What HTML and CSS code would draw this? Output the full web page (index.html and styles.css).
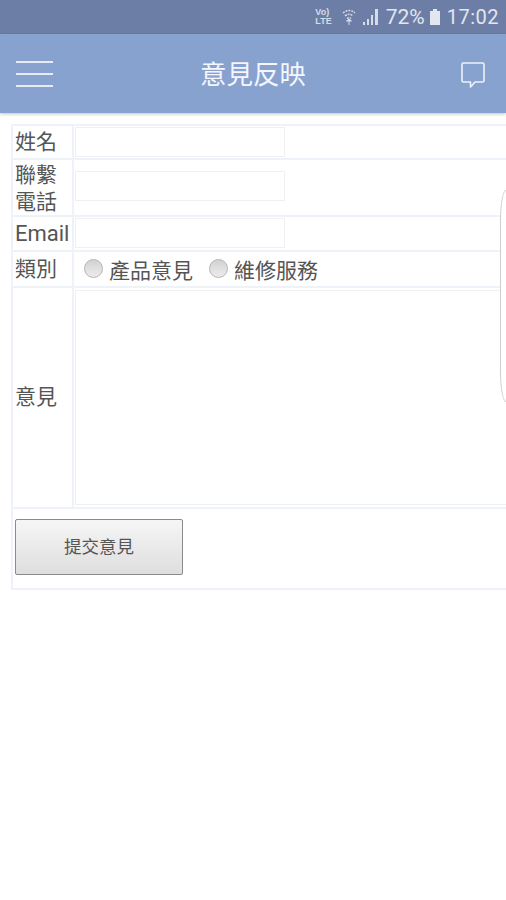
FILE: index.html
```html
<!doctype html>
<html lang="zh-Hant">
  <head>
    <meta charset="UTF-8" />
    <meta name="viewport" content="width=device-width, initial-scale=1.0" />
    <title>意見反映</title>
    <link rel="stylesheet" href="styles.css">
  </head>
  <body>
    <div class="statusbar">
      <span class="volte">Vo)<br>LTE</span>
      <svg class="wifi" width="16" height="18" viewBox="0 0 16 18">
        <path d="M2 5 Q8 0 14 5 M4 8 Q8 4.500 12 8 M6 10.500 Q8 9 10 10.500" fill="none" stroke="#d5dbe8" stroke-width="1.500" stroke-dasharray="2 1" />
        <path d="M5.500 13 L8 11 L10.500 13 Z M8 13 V17" fill="#d5dbe8" stroke="#d5dbe8" />
      </svg>
      <svg class="signal" width="18" height="18" viewBox="0 0 18 18">
        <path d="M1 14h2v3H1z M5 11h2v6H5z M9 7h2v10H9z" fill="#d5dbe8" />
        <path d="M13 1h3v16h-3z" fill="#d5dbe8" />
      </svg>
      <span class="battery-pct">72%</span>
      <svg class="battery" width="12" height="16" viewBox="0 0 12 16">
        <path d="M4 0h4v2h3v14H1V2h3z" fill="#e2e6ef" />
      </svg>
      <span class="clock">17:02</span>
    </div>

    <header class="topbar">
      <div class="menu-icon"><span></span><span></span><span></span></div>
      <h1>意見反映</h1>
      <svg class="chat-icon" width="26" height="28" viewBox="0 0 26 28">
        <path d="M3.500 2h19a1.500 1.500 0 0 1 1.500 1.500v16a1.500 1.500 0 0 1-1.500 1.500H15l-4.500 5v-5H3.500A1.500 1.500 0 0 1 2 19.500v-16A1.500 1.500 0 0 1 3.500 2z" fill="none" stroke="#eef2f9" stroke-width="1.600" stroke-linejoin="round" />
      </svg>
    </header>

    <main class="content">
      <table class="form-table">
        <tr class="row-name">
          <th>姓名</th>
          <td><input class="field" type="text"></td>
        </tr>
        <tr class="row-phone">
          <th>聯繫<br>電話</th>
          <td><input class="field" type="text"></td>
        </tr>
        <tr class="row-email">
          <th>Email</th>
          <td><input class="field" type="text"></td>
        </tr>
        <tr class="row-type">
          <th>類別</th>
          <td>
            <div class="radio-group">
              <span class="radio"></span><span class="radio-label">產品意見</span>
              <span class="radio radio-second"></span><span class="radio-label">維修服務</span>
            </div>
          </td>
        </tr>
        <tr class="row-opinion">
          <th>意見</th>
          <td><div class="opinion-box"></div></td>
        </tr>
        <tr class="row-submit">
          <td colspan="2"><button class="submit">提交意見</button></td>
        </tr>
      </table>
    </main>

    <div class="side-handle"></div>
  </body>
</html>
```

FILE: styles.css
```css
html,
body {
  margin: 0;
  padding: 0;
  height: 900px;
  overflow: hidden;
  background-color: #ffffff;
}
body {
  position: relative;
  font-family: "Noto Sans CJK TC", "Liberation Sans", sans-serif;
  color: #555;
}
.statusbar {
  height: 34px;
  background-color: #6c7ea6;
  display: flex;
  align-items: center;
  justify-content: flex-end;
  padding-right: 7px;
  color: #e2e6ef;
  box-sizing: border-box;
}
.volte {
  font-family: "Liberation Sans", sans-serif;
  font-size: 9px;
  line-height: 9px;
  font-weight: bold;
  margin-right: 9px;
  color: #d5dbe8;
}
.wifi {
  margin-right: 5px;
}
.signal {
  margin-right: 6px;
}
.battery-pct,
.clock {
  font-family: "Roboto", sans-serif;
  font-size: 20px;
}
.battery-pct {
  font-size: 21px;
}
.battery {
  margin: 0 6px 0 4px;
}
.clock {
  letter-spacing: 0.5px;
}
.topbar {
  height: 79px;
  background-color: #88a2d0;
  box-shadow: 0 1px 3px rgba(0, 0, 0, 0.25);
  display: flex;
  align-items: center;
  justify-content: space-between;
  padding: 0 20px 0 16px;
  position: relative;
}
.topbar h1 {
  position: absolute;
  left: 0;
  right: 0;
  top: 20px;
  margin: 0;
  text-align: center;
  font-size: 26.500px;
  line-height: 38px;
  font-weight: 400;
  color: #f4f6fb;
}
.menu-icon {
  display: flex;
  flex-direction: column;
  gap: 10px;
  width: 37px;
}
.menu-icon span {
  display: block;
  height: 2px;
  background-color: #e6ebf5;
}
.chat-icon {
  margin-top: 2px;
}
.content {
  padding: 11px 0 0 11px;
  overflow: hidden;
}
.form-table {
  width: 520px;
  table-layout: fixed;
  border-collapse: collapse;
}
.form-table th,
.form-table td {
  border: 2px solid #eef2f9;
  padding: 0;
  font-weight: 400;
  font-size: 21px;
  color: #555;
}
.form-table th {
  width: 61px;
  text-align: left;
  padding: 0 0 4px 2px;
  box-sizing: border-box;
  line-height: 27px;
}
.form-table td {
  padding-left: 1px;
}
.row-name {
  height: 34px;
}
.row-phone {
  height: 57px;
}
.form-table .row-phone th {
  padding-bottom: 0;
  vertical-align: top;
}
.row-phone .field {
  margin-bottom: 4px;
}
.row-email {
  height: 35px;
}
.form-table .row-email th {
  font-family: "Roboto", sans-serif;
  font-size: 22px;
  padding-bottom: 0;
}
.row-email .field {
  margin-bottom: 2px;
}
.row-type {
  height: 36px;
}
.row-opinion {
  height: 221px;
}
.row-submit {
  height: 81px;
}
.form-table .row-submit td {
  padding: 0 0 3px 2px;
}
.field {
  display: block;
  width: 210px;
  height: 30px;
  box-sizing: border-box;
  border: 1px solid #f0f0f2;
  background-color: #ffffff;
  padding: 0;
  margin: 0;
}
.radio-group {
  display: flex;
  align-items: center;
}
.radio {
  width: 19px;
  height: 19px;
  box-sizing: border-box;
  border-radius: 50%;
  border: 1px solid #b5b5b5;
  background: linear-gradient(#d2d2d2, #ececec);
  margin: 0 0 1px 9px;
}
.radio-second {
  margin-left: 16px;
}
.radio-label {
  margin-left: 6px;
  font-size: 21px;
  line-height: 30px;
}
.opinion-box {
  height: 215px;
  border: 1px solid #eef0f4;
  box-sizing: border-box;
}
.submit {
  display: block;
  width: 168px;
  height: 56px;
  box-sizing: border-box;
  border: 1px solid #8a8a8a;
  border-radius: 2px;
  background: linear-gradient(#f6f6f6, #dedede);
  font-family: inherit;
  font-size: 17.500px;
  color: #555;
  padding: 0 0 4px;
}
.side-handle {
  position: absolute;
  right: 0;
  top: 190px;
  width: 6px;
  height: 212px;
  box-sizing: border-box;
  border: solid #cfcfcf;
  border-width: 1px 0 1px 1px;
  border-radius: 6px 0 0 6px / 30px 0 0 30px;
  background-color: #ffffff;
}
```
